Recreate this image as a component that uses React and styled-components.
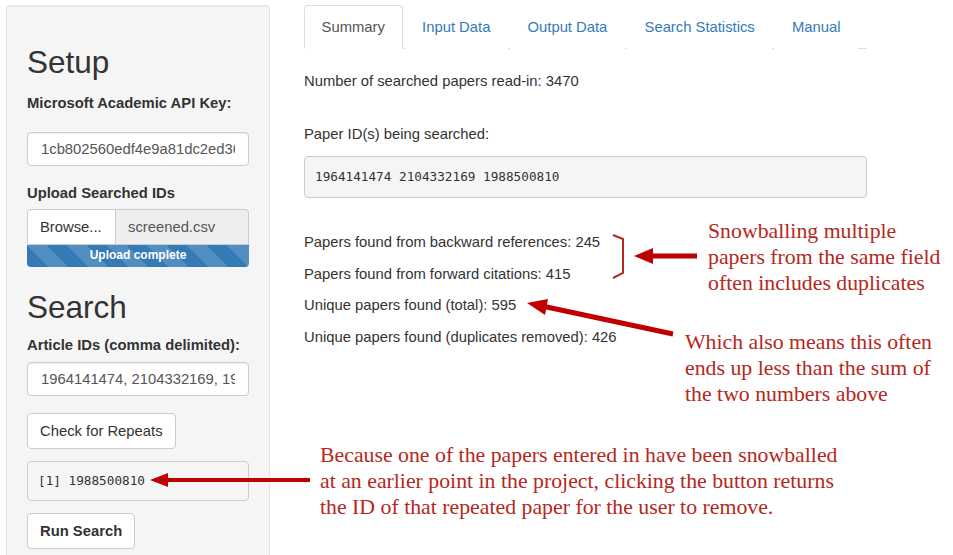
import React from 'react';
import styled, { createGlobalStyle } from 'styled-components';

const GlobalStyle = createGlobalStyle`
  html, body {
    margin: 0;
    padding: 0;
    background: #fff;
  }
  body {
    font-family: 'Liberation Sans', Arial, sans-serif;
    font-size: 14.8px;
    line-height: 20px;
    color: #333;
  }
  * {
    box-sizing: border-box;
  }
`;

const tabs = ['Summary', 'Input Data', 'Output Data', 'Search Statistics', 'Manual'];

const stats = [
  'Papers found from backward references: 245',
  'Papers found from forward citations: 415',
  'Unique papers found (total): 595',
  'Unique papers found (duplicates removed): 426',
];

function Annotations() {
  const red = '#c00000';
  return (
    <Overlay width='953' height='555' viewBox='0 0 953 555'>
      {/* bracket round the two first counts */}
      <polyline
        points='613,235 623,239 623,273 613,278'
        fill='none'
        stroke='#b5281c'
        strokeWidth='2'
      />
      {/* arrow to bracket */}
      <line x1='697' y1='256' x2='650' y2='256' stroke={red} strokeWidth='5' />
      <polygon points='634,256 653,248 653,264' fill={red} />
      {/* arrow to total */}
      <line x1='673' y1='334' x2='542' y2='306' stroke={red} strokeWidth='5' />
      <polygon points='527,303 545,315 548,299' fill={red} />
      {/* arrow to repeated id */}
      <line x1='310' y1='480' x2='165' y2='480' stroke={red} strokeWidth='4' />
      <polygon points='150,480 168,473 168,487' fill={red} />
    </Overlay>
  );
}

export default function App() {
  return (
    <>
      <GlobalStyle />
      <Page>
        <Sidebar>
          <Heading>Setup</Heading>
          <Label $gap={14}>Microsoft Academic API Key:</Label>
          <TextInput $gap={19} readOnly value='1cb802560edf4e9a81dc2ed36a7f' />
          <Label $gap={17}>Upload Searched IDs</Label>
          <FileGroup>
            <BrowseButton>Browse...</BrowseButton>
            <FileName>screened.csv</FileName>
          </FileGroup>
          <Progress>Upload complete</Progress>
          <Heading $gap={24}>Search</Heading>
          <Label $gap={11}>Article IDs (comma delimited):</Label>
          <TextInput $gap={7} readOnly value='1964141474, 2104332169, 1988500810' />
          <Button $gap={17}>Check for Repeats</Button>
          <Output $gap={12}>[1] 1988500810</Output>
          <Button $gap={12} $bold>
            Run Search
          </Button>
        </Sidebar>

        <Main>
          <TabBar>
            {tabs.map((t, i) => (
              <Tab key={t} $active={i === 0}>
                {t}
              </Tab>
            ))}
          </TabBar>
          <Line $gap={22}>Number of searched papers read-in: 3470</Line>
          <Line $gap={33}>Paper ID(s) being searched:</Line>
          <Output $gap={12} $wide>
            1964141474 2104332169 1988500810
          </Output>
          <StatList>
            {stats.map((s) => (
              <Line key={s} $gap={0}>
                {s}
              </Line>
            ))}
          </StatList>
        </Main>

        <Note $x={708} $y={218}>
          Snowballing multiple
          <br />
          papers from the same field
          <br />
          often includes duplicates
        </Note>
        <Note $x={685} $y={329}>
          Which also means this often
          <br />
          ends up less than the sum of
          <br />
          the two numbers above
        </Note>
        <Note $x={320} $y={442}>
          Because one of the papers entered in have been snowballed
          <br />
          at an earlier point in the project, clicking the button returns
          <br />
          the ID of that repeated paper for the user to remove.
        </Note>
        <Annotations />
      </Page>
    </>
  );
}

const Page = styled.div`
  position: relative;
  display: flex;
  align-items: flex-start;
  gap: 34px;
  width: 953px;
  height: 555px;
  padding: 5px 0 0 6px;
  overflow: hidden;
`;

const Sidebar = styled.div`
  display: flex;
  flex-direction: column;
  align-items: flex-start;
  flex-shrink: 0;
  width: 264px;
  height: 560px;
  padding: 19px 20px;
  background-color: #f5f5f5;
  border: 1px solid #e3e3e3;
  border-radius: 4px;
  box-shadow: inset 0 1px 1px rgba(0, 0, 0, 0.05);

  & > * {
    flex-shrink: 0;
  }
`;

const Heading = styled.h2`
  margin: ${(p) => p.$gap || 21}px 0 0;
  font-size: 31.5px;
  font-weight: 500;
  line-height: 33px;
  color: #333;
`;

const Label = styled.label`
  display: block;
  margin-top: ${(p) => p.$gap}px;
  font-weight: bold;
  line-height: 20px;
`;

const TextInput = styled.input`
  display: block;
  width: 100%;
  height: 34px;
  margin-top: ${(p) => p.$gap}px;
  padding: 6px 13px;
  font-family: inherit;
  font-size: 14.8px;
  color: #555;
  background: #fff;
  border: 1px solid #ccc;
  border-radius: 4px;
  box-shadow: inset 0 1px 1px rgba(0, 0, 0, 0.075);
  outline: none;
`;

const FileGroup = styled.div`
  display: flex;
  width: 100%;
  height: 36px;
  margin-top: 6px;
`;

const BrowseButton = styled.span`
  display: flex;
  align-items: center;
  width: 89px;
  padding: 0 12px;
  background: #fff;
  border: 1px solid #ccc;
  border-radius: 4px 0 0 0;
  color: #333;
`;

const FileName = styled.span`
  display: flex;
  align-items: center;
  flex: 1;
  padding: 0 12px;
  background: #eee;
  border: 1px solid #ccc;
  border-left: none;
  border-radius: 0 4px 0 0;
  color: #555;
`;

const Progress = styled.div`
  width: 100%;
  height: 22px;
  line-height: 21px;
  text-align: center;
  font-size: 12px;
  font-weight: bold;
  color: #fff;
  background-color: #337ab7;
  background-image: linear-gradient(
    45deg,
    rgba(255, 255, 255, 0.15) 25%,
    transparent 25%,
    transparent 50%,
    rgba(255, 255, 255, 0.15) 50%,
    rgba(255, 255, 255, 0.15) 75%,
    transparent 75%,
    transparent
  );
  background-size: 40px 40px;
  border-radius: 0 0 4px 4px;
`;

const Button = styled.button`
  height: 36px;
  margin-top: ${(p) => p.$gap}px;
  padding: 6px 12px;
  font-family: inherit;
  font-size: 14.8px;
  font-weight: ${(p) => (p.$bold ? 'bold' : 'normal')};
  color: #333;
  background: #fff;
  border: 1px solid #ccc;
  border-radius: 4px;
`;

const Output = styled.pre`
  flex-shrink: 0;
  width: 100%;
  height: ${(p) => (p.$wide ? 42 : 40)}px;
  margin: ${(p) => p.$gap}px 0 0;
  padding: 0 10px;
  display: flex;
  align-items: center;
  font-family: 'DejaVu Sans Mono', 'Liberation Mono', monospace;
  font-size: 12.7px;
  color: #333;
  background: #f5f5f5;
  border: 1px solid #ccc;
  border-radius: 4px;
`;

const Main = styled.div`
  display: flex;
  flex-direction: column;
  width: 563px;
`;

const TabBar = styled.ul`
  display: flex;
  margin: 0;
  padding: 0;
  list-style: none;
  border-bottom: 1px solid #ddd;
`;

const Tab = styled.li`
  margin: 0 2px -1px 0;
  padding: 11px 16.6px;
  line-height: 20px;
  font-size: 14.8px;
  color: ${(p) => (p.$active ? '#555' : '#337ab7')};
  background: #fff;
  border: 1px solid ${(p) => (p.$active ? '#ddd' : 'transparent')};
  border-bottom-color: ${(p) => (p.$active ? '#fff' : 'transparent')};
  border-radius: 4px 4px 0 0;
`;

const Line = styled.div`
  margin-top: ${(p) => p.$gap}px;
  line-height: 20px;
`;

const StatList = styled.div`
  display: flex;
  flex-direction: column;
  gap: 11.7px;
  margin-top: 34px;
`;

const Note = styled.div`
  position: absolute;
  left: ${(p) => p.$x}px;
  top: ${(p) => p.$y}px;
  font-family: 'Liberation Serif', 'Times New Roman', serif;
  font-size: 21.8px;
  line-height: 26px;
  color: #b5281c;
  white-space: nowrap;
`;

const Overlay = styled.svg`
  position: absolute;
  left: 0;
  top: 0;
  pointer-events: none;
`;
